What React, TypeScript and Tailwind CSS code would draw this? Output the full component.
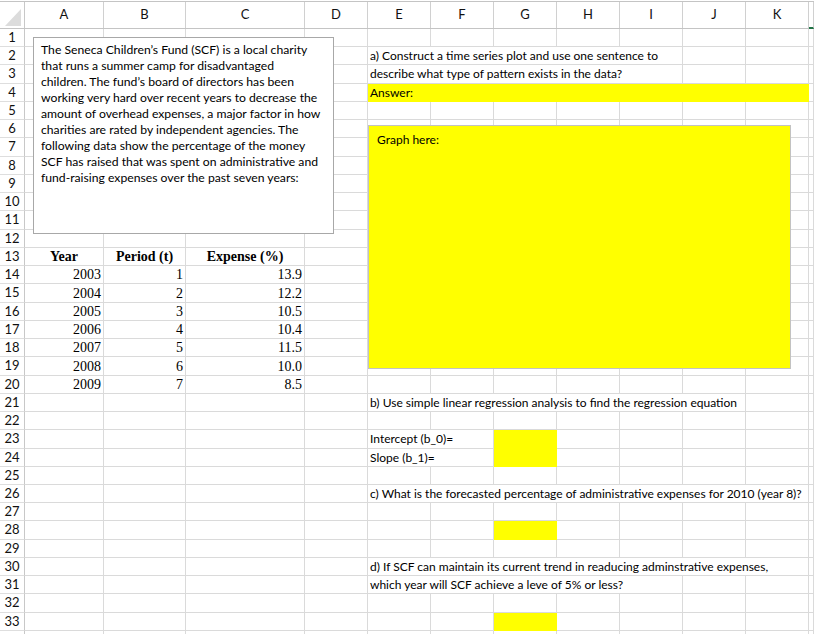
import React from "react";

type Cell = {
  span?: number;
  text?: React.ReactNode;
  kind?: "q" | "head" | "num" | "yellow" | "yellowTop";
};

// column widths A..K plus the sliver of L at the right edge
const COLS = [79, 82, 119, 63, 63, 63, 63, 63, 63, 63, 63, 5];
const LETTERS = ["A", "B", "C", "D", "E", "F", "G", "H", "I", "J", "K", ""];

const W: Record<number, string> = {
  5: "w-[5px]",
  63: "w-[63px]",
  79: "w-[79px]",
  82: "w-[82px]",
  119: "w-[119px]",
  126: "w-[126px]",
  252: "w-[252px]",
  315: "w-[315px]",
  378: "w-[378px]",
  441: "w-[441px]",
};

const single = (from: number): Cell[] =>
  COLS.slice(from).map(() => ({}));

const left: Cell[] = [{}, {}, {}, {}]; // A..D

const years = [
  ["2003", "1", "13.9"],
  ["2004", "2", "12.2"],
  ["2005", "3", "10.5"],
  ["2006", "4", "10.4"],
  ["2007", "5", "11.5"],
  ["2008", "6", "10.0"],
  ["2009", "7", "8.5"],
];

const rows: Record<number, Cell[]> = {
  2: [...left, { span: 5, kind: "q", text: "a) Construct a time series plot and use one sentence to" }, {}, {}, {}],
  3: [...left, { span: 5, kind: "q", text: "describe what type of pattern exists in the data?" }, {}, {}, {}],
  4: [...left, { span: 7, kind: "yellow", text: "Answer:" }, {}],
  13: [
    { kind: "head", text: "Year" },
    { kind: "head", text: "Period (t)" },
    { kind: "head", text: "Expense (%)" },
    ...single(3),
  ],
  21: [...left, { span: 6, kind: "q", text: "b) Use simple linear regression analysis to find the regression equation" }, {}, {}],
  23: [...left, { span: 2, kind: "q", text: "Intercept (b_0)=" }, { kind: "yellowTop" }, {}, {}, {}, {}, {}],
  24: [...left, { span: 2, kind: "q", text: "Slope (b_1)=" }, { kind: "yellow" }, {}, {}, {}, {}, {}],
  26: [...left, { span: 7, kind: "q", text: "c) What is the forecasted percentage of administrative expenses for 2010 (year 8)?" }, {}],
  28: [...left, {}, {}, { kind: "yellow" }, {}, {}, {}, {}, {}],
  30: [...left, { span: 7, kind: "q", text: "d) If SCF can maintain its current trend in readucing adminstrative expenses," }, {}],
  31: [...left, { span: 5, kind: "q", text: "which year will SCF achieve a leve of 5% or less?" }, {}, {}, {}],
  33: [...left, {}, {}, { kind: "yellow" }, {}, {}, {}, {}, {}],
};

years.forEach(([y, p, e], i) => {
  rows[14 + i] = [
    { kind: "num", text: y },
    { kind: "num", text: p },
    { kind: "num", text: e },
    ...single(3),
  ];
});

const tops = Array.from({ length: 36 }, (_, i) => Math.round(29 + 18.24 * i));

function GridCell({ cell, col }: { cell: Cell; col: number }) {
  const span = cell.span ?? 1;
  const width = COLS.slice(col, col + span).reduce((a, b) => a + b, 0);
  const base = `${W[width]} shrink-0 h-full flex items-center overflow-hidden whitespace-nowrap`;

  if (cell.kind === "yellow" || cell.kind === "yellowTop") {
    const b = cell.kind === "yellowTop" ? "border-r border-[#ffff00]" : "border-r border-b border-[#ffff00]";
    return (
      <div className={`${base} ${b} bg-[#ffff00] px-[2px] text-[12px] text-black font-['Lato',sans-serif]`}>
        {cell.text}
      </div>
    );
  }
  if (cell.kind === "q") {
    return (
      <div className={`${base} border-r border-b border-[#dadada] px-[2px] text-[12px] text-black font-['Lato',sans-serif]`}>
        {cell.text}
      </div>
    );
  }
  if (cell.kind === "head") {
    return (
      <div className={`${base} justify-center border-r border-b border-[#dadada] text-[14px] font-bold text-black font-['Liberation_Serif',serif]`}>
        {cell.text}
      </div>
    );
  }
  if (cell.kind === "num") {
    return (
      <div className={`${base} justify-end border-r border-b border-[#dadada] pr-[2px] text-[14px] text-black font-['Liberation_Serif',serif]`}>
        {cell.text}
      </div>
    );
  }
  return <div className={`${base} border-r border-b border-[#dadada]`} />;
}

function SheetRow({ n }: { n: number }) {
  const h = tops[n] - tops[n - 1];
  const cells = rows[n] ?? single(0);
  let col = 0;
  return (
    <div className={`flex ${h === 19 ? "h-[19px]" : "h-[18px]"}`}>
      <div className="w-[25px] shrink-0 flex items-center justify-center border-r border-b border-[#c8c8c8] border-b-[#dedede] text-[13px] text-[#111] font-['Lato',sans-serif]">
        {n < 34 ? n : ""}
      </div>
      {cells.map((c, i) => {
        const el = <GridCell key={i} cell={c} col={col} />;
        col += c.span ?? 1;
        return el;
      })}
    </div>
  );
}

const story = [
  "The Seneca Children’s Fund (SCF) is a local charity",
  "that runs a summer camp for disadvantaged",
  "children. The fund’s board of directors has been",
  "working very hard over recent years to decrease the",
  "amount of overhead expenses, a major factor in how",
  "charities are rated by independent agencies. The",
  "following data show the percentage of the money",
  "SCF has raised that was spent on administrative and",
  "fund-raising expenses over the past seven years:",
];

export default function App() {
  return (
    <div className="relative w-[814px] h-[634px] overflow-hidden bg-white">
      {/* column headers */}
      <div className="flex h-[28px] mt-px border-t border-b border-[#c4c4c4] bg-white text-[13px] text-[#111] font-['Lato',sans-serif]">
        <div className="w-[25px] shrink-0 border-r border-[#c8c8c8] flex items-end justify-end pr-[2px] pb-[1px]">
          <svg width="18" height="20" viewBox="0 0 18 20">
            <polygon points="1,19 17,19 17,2" fill="#dcdcdc" />
          </svg>
        </div>
        {COLS.map((w, i) => (
          <div
            key={i}
            className={`${W[w]} shrink-0 flex items-center justify-center border-r border-[#d0d0d0] ${
              i === 11 ? "border-b-2 border-b-[#217346] -mb-px" : ""
            }`}
          >
            {LETTERS[i]}
          </div>
        ))}
      </div>

      {Array.from({ length: 34 }, (_, i) => (
        <SheetRow key={i} n={i + 1} />
      ))}

      {/* problem text box */}
      <div className="absolute left-[33px] top-[37px] w-[301px] h-[197px] border border-[#a8a8a8] bg-white pl-[7px] pt-[4px] text-[12.2px] leading-[16px] text-black font-['Lato',sans-serif]">
        {story.map((line) => (
          <div key={line} className="whitespace-nowrap">
            {line}
          </div>
        ))}
      </div>

      {/* graph placeholder */}
      <div className="absolute left-[368px] top-[125px] w-[423px] h-[244px] border border-[#c2c2c2] bg-[#ffff00] pl-[8px] pt-[5px] text-[12px] text-black font-['Lato',sans-serif]">
        Graph here:
      </div>
    </div>
  );
}
